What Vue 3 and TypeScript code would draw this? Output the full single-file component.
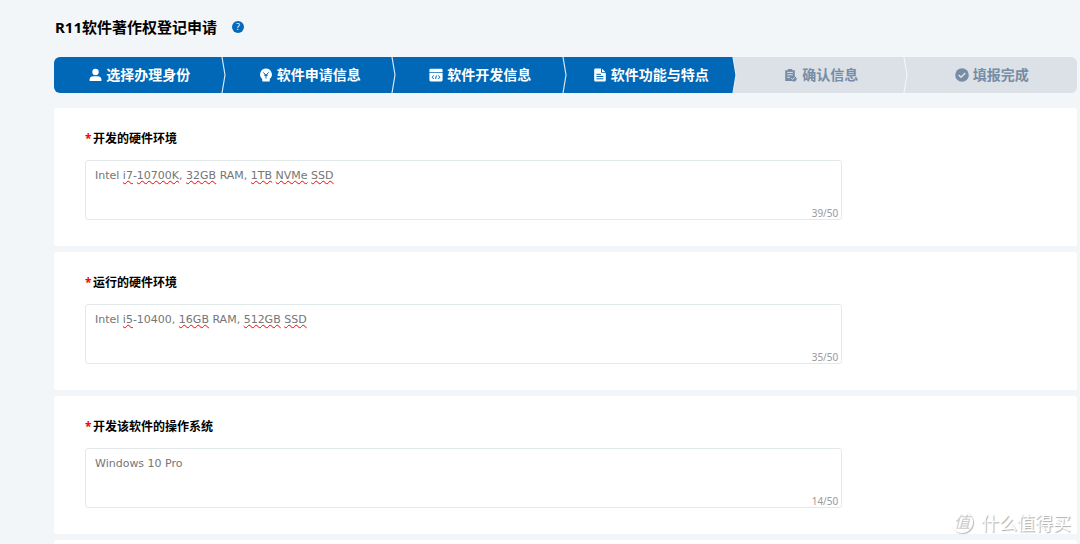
<script setup lang="ts">
import { reactive } from 'vue'

interface Segment { text: string; flagged?: boolean }
interface Field { id: string; label: string; value: string; max: number; spelling: Segment[] }
interface Step { label: string; icon: string; done: boolean }

const steps: Step[] = [
  { label: '选择办理身份', icon: 'user', done: true },
  { label: '软件申请信息', icon: 'bulb', done: true },
  { label: '软件开发信息', icon: 'code', done: true },
  { label: '软件功能与特点', icon: 'doc', done: true },
  { label: '确认信息', icon: 'clip', done: false },
  { label: '填报完成', icon: 'check', done: false },
]

const fields = reactive<Field[]>([
  {
    id: 'dev-hardware', label: '开发的硬件环境', value: 'Intel i7-10700K, 32GB RAM, 1TB NVMe SSD', max: 50,
    spelling: [
      { text: 'Intel ' }, { text: 'i7', flagged: true }, { text: '-' }, { text: '10700K', flagged: true },
      { text: ', ' }, { text: '32GB', flagged: true }, { text: ' RAM, ' }, { text: '1TB', flagged: true },
      { text: ' ' }, { text: 'NVMe', flagged: true }, { text: ' ' }, { text: 'SSD', flagged: true },
    ],
  },
  {
    id: 'run-hardware', label: '运行的硬件环境', value: 'Intel i5-10400, 16GB RAM, 512GB SSD', max: 50,
    spelling: [
      { text: 'Intel ' }, { text: 'i5', flagged: true }, { text: '-10400, ' }, { text: '16GB', flagged: true },
      { text: ' RAM, ' }, { text: '512GB', flagged: true }, { text: ' ' }, { text: 'SSD', flagged: true },
    ],
  },
  { id: 'dev-os', label: '开发该软件的操作系统', value: 'Windows 10 Pro', max: 50, spelling: [] },
])
</script>

<template>
  <main class="page">
    <header class="heading">
      <h1>R11软件著作权登记申请</h1>
      <button class="help" type="button" aria-label="帮助">?</button>
    </header>

    <ol class="steps">
      <li v-for="(step, i) in steps" :key="step.label" class="step" :class="{ done: step.done, current: step.done && !steps[i + 1]?.done }">
        <svg v-if="step.icon === 'user'" class="icon" viewBox="0 0 14 14" aria-hidden="true">
          <circle cx="7.500" cy="4" r="3.200" fill="currentColor" />
          <path d="M1.600 13v-1.400C1.600 9.400 3.200 8.200 5.400 8.200h4.200c2.200 0 3.800 1.200 3.800 3.400V13z" fill="currentColor" />
        </svg>
        <svg v-else-if="step.icon === 'bulb'" class="icon" viewBox="0 0 14 14" aria-hidden="true">
          <path d="M7 .6a5.900 5.900 0 0 0-3.800 10.400V12.400Q3.200 13.600 4.400 13.600h5.200q1.200 0 1.200-1.200V11A5.900 5.900 0 0 0 7 .6z" fill="currentColor" />
          <path d="M4.300 4.400 7 7.200l2.700-2.800M7 7v3.600M5 7.200h4" class="cut" />
        </svg>
        <svg v-else-if="step.icon === 'code'" class="icon" viewBox="0 0 14 14" aria-hidden="true">
          <path d="M1.600.8h10.800q1.200 0 1.200 1.200v2.200H.4V2Q.4.8 1.600.8zM.4 5h13.200v7.100q0 1.300-1.300 1.300H1.700Q.4 13.400.4 12.100z" fill="currentColor" />
          <path d="M4.700 7.400 3.200 9.200l1.500 1.800M9.300 7.400l1.500 1.800L9.300 11M7.400 7.400 6.600 11" class="cut" />
        </svg>
        <svg v-else-if="step.icon === 'doc'" class="icon" viewBox="0 0 14 14" aria-hidden="true">
          <path d="M2.400.5H8v3.300q0 1.200 1.200 1.200h3.600v7.300q0 1.200-1.200 1.200H2.400q-1.200 0-1.200-1.200V1.700Q1.200.5 2.400.5zM9 .7 12.600 4.200H9z" fill="currentColor" />
          <path d="M3.400 6.300H8M3.400 8.500h7M3.400 10.800h7" class="cut" />
        </svg>
        <svg v-else-if="step.icon === 'clip'" class="icon" viewBox="0 0 14 14" aria-hidden="true">
          <path d="M1.200 2.200h2.600V1.100h4.400v1.100h2.600v6.200a2.600 2.600 0 1 1-2.400 4.500H1.200z" fill="currentColor" />
          <path d="M3.200 4.400h5.600M3.200 6.800h5.600M3.200 9.300h2.800M7.400 10.300l1.200 1.200 1.900-2" class="cut" />
        </svg>
        <svg v-else class="icon" viewBox="0 0 14 14" aria-hidden="true">
          <circle cx="7" cy="7" r="6.800" fill="currentColor" />
          <path d="m3.700 7 2.300 2.300 4.300-4.300" class="cut tick" />
        </svg>
        <span>{{ step.label }}</span>
        <svg v-if="i < steps.length - 1" class="arrow" viewBox="0 0 8 36" preserveAspectRatio="none" aria-hidden="true">
          <path d="M3 0H8V36H3z" class="arrow-next" />
          <path d="M0 0H3L6 18 3 36H0z" class="arrow-fill" />
          <path d="M3 0 6 18 3 36" class="arrow-line" />
        </svg>
      </li>
    </ol>

    <form class="cards" @submit.prevent>
      <section v-for="field in fields" :key="field.id" class="card">
        <label :for="field.id"><span class="required">*</span>{{ field.label }}</label>
        <div class="box">
          <textarea :id="field.id" v-model="field.value" :maxlength="field.max" spellcheck="false" required></textarea>
          <div class="spelling" aria-hidden="true"><span v-for="(seg, n) in field.spelling" :key="n" :class="{ flagged: seg.flagged }">{{ seg.text }}</span></div>
          <output :for="field.id" class="count">{{ field.value.length }}/{{ field.max }}</output>
        </div>
      </section>
      <section class="card"></section>
    </form>

    <div class="watermark"><span class="seal">值</span><span>什么值得买</span></div>
  </main>
</template>

<style>
html, body { background: #f2f6f9; }
body { margin: 0; overflow: hidden; }
</style>

<style scoped>
* { box-sizing: border-box; }
.page {
  position: relative;
  height: 100vh;
  overflow: hidden;
  padding: 17px 3px 0 54px;
  background: #f2f6f9;
  color: #000;
  font-family: "Noto Sans", "Noto Sans CJK SC", sans-serif;
}
.heading { display: flex; align-items: center; gap: 15px; height: 20px; padding-left: 1px; }
h1 { margin: 0; font-size: 15px; line-height: 20px; font-weight: 700; }
.help {
  width: 12px; height: 12px; padding: 0; border: 0; border-radius: 50%;
  background: #0569b8; color: #fff; font: 9px/12px "Noto Sans", sans-serif;
}
.steps {
  display: flex; height: 36px; margin: 20px 0 0; padding: 0; list-style: none;
  border-radius: 6px; overflow: hidden;
}
.step {
  position: relative; flex: 1; display: flex; align-items: center; justify-content: center; gap: 4px;
  --tone: #dbe1e7; --next: var(--tone); --edge: #f1f5f9;
  background: var(--tone); color: #778ca5; font-size: 14px; line-height: 20px; font-weight: 700; white-space: nowrap;
}
.step.done { --tone: #0068b7; --edge: #d5e8f6; color: #fff; }
.step.current { --next: #dbe1e7; --edge: #e6edf3; }
.icon { width: 14px; height: 14px; flex: none; }
.cut { fill: none; stroke: var(--tone); stroke-width: 1; }
.tick { stroke-width: 1.500; }
.arrow { position: absolute; z-index: 1; top: 0; right: -2px; width: 8px; height: 100%; }
.arrow-next { fill: var(--next); }
.arrow-fill { fill: var(--tone); }
.arrow-line { fill: none; stroke: var(--edge); stroke-width: 1.200; }
.cards { display: flex; flex-direction: column; gap: 6px; margin-top: 15px; }
.card { min-height: 60px; padding: 21px 31px 26px; border-radius: 3px; background: #fff; }
label { display: flex; align-items: center; height: 20px; font-size: 12px; line-height: 20px; font-weight: 700; }
.required { width: 8px; color: #f00; font-size: 12px; }
.box { position: relative; width: 78.8%; height: 60px; margin-top: 11px; }
textarea, .spelling {
  display: block; width: 100%; height: 100%; margin: 0; padding: 6px 9px; border: 1px solid #e2e9e9; border-radius: 3px;
  font: 11px/17px "DejaVu Sans", sans-serif; white-space: pre-wrap;
}
textarea { resize: none; outline: 0; background: #fff; color: #757575; }
.spelling { position: absolute; inset: 0; border-color: transparent; color: transparent; pointer-events: none; }
.flagged { text-decoration: underline wavy #f00 1px; text-underline-offset: 1px; text-decoration-skip-ink: none; }
.count { position: absolute; right: 4px; bottom: 0; color: #999; font-size: 10px; line-height: 14px; }
.watermark {
  position: absolute; right: 9px; bottom: 10px; display: flex; align-items: center; gap: 8px;
  color: #fff; font: 18px/24px "Noto Sans CJK SC", sans-serif; text-shadow: 1px 1px 1px #aaa;
}
.seal {
  width: 22px; height: 22px; border-radius: 50%; box-shadow: 1px 1px 1px #bbb;
  color: #ccc; font-size: 16px; font-style: italic; line-height: 21px; text-align: center; text-shadow: none;
}
</style>
